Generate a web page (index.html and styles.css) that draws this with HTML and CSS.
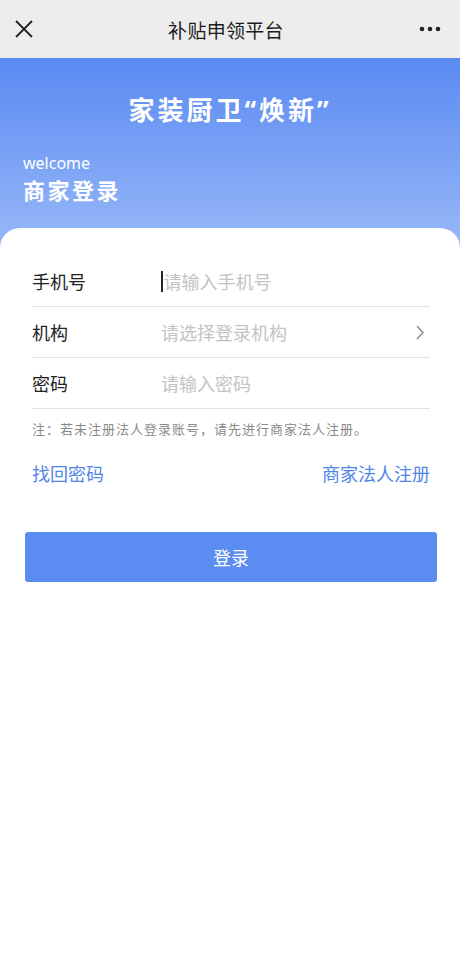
FILE: index.html
```html
<!DOCTYPE html>
<html lang="zh-CN">
<head>
    <meta charset="UTF-8">
    <meta name="viewport" content="width=device-width, initial-scale=1.0">
    <title>补贴申领平台</title>
    <link rel="stylesheet" href="styles.css">
</head>
<body>

    <div class="topbar">
        <svg class="close-icon" width="18" height="18" viewBox="0 0 18 18">
            <path d="M1 1 L17 17 M17 1 L1 17" stroke="#222" stroke-width="1.8" fill="none"/>
        </svg>
        <div class="topbar-title">补贴申领平台</div>
        <svg class="more-icon" width="22" height="6" viewBox="0 0 22 6">
            <circle cx="3" cy="3" r="2.3" fill="#222"/>
            <circle cx="11" cy="3" r="2.3" fill="#222"/>
            <circle cx="19" cy="3" r="2.3" fill="#222"/>
        </svg>
    </div>

    <div class="hero">
        <h1>家装厨卫“焕新”</h1>
        <div class="welcome">welcome</div>
        <div class="hero-sub">商家登录</div>
    </div>

    <div class="card">
        <div class="form-row">
            <label>手机号</label>
            <div class="field"><span class="caret"></span><span class="placeholder">请输入手机号</span></div>
        </div>
        <div class="form-row">
            <label>机构</label>
            <div class="field"><span class="placeholder">请选择登录机构</span></div>
            <svg class="arrow" width="8" height="15" viewBox="0 0 8 15">
                <path d="M1 1 L7 7.5 L1 14" stroke="#888" stroke-width="1.4" fill="none"/>
            </svg>
        </div>
        <div class="form-row">
            <label>密码</label>
            <div class="field"><span class="placeholder">请输入密码</span></div>
        </div>

        <p class="note">注：若未注册法人登录账号，请先进行商家法人注册。</p>

        <div class="links">
            <a href="#">找回密码</a>
            <a href="#">商家法人注册</a>
        </div>

        <button class="login-btn">登录</button>
    </div>

</body>
</html>
```

FILE: styles.css
```css
body {
    margin: 0;
    padding: 0;
    font-family: "Noto Sans CJK SC", "Noto Sans", sans-serif;
    background: #fff;
}
.topbar {
    height: 58px;
    background: #ededed;
    display: flex;
    align-items: center;
    justify-content: space-between;
    padding: 0 19px 0 14px;
}
.topbar-title {
    font-size: 19px;
    color: #1c1c1c;
    letter-spacing: 0.3px;
}
.close-icon { margin-left: 1px; }
.hero {
    background: linear-gradient(180deg, #5a8af2 0%, #98b8f7 100%);
    padding: 33px 23px 45px;
    color: #fff;
}
.hero h1 {
    margin: 0;
    font-family: "Noto Sans", "Noto Sans CJK SC", sans-serif;
    font-size: 26px;
    line-height: 38px;
    font-weight: 700;
    letter-spacing: 3px;
    text-align: center;
}
.welcome {
    margin-top: 24px;
    font-family: "Noto Sans", sans-serif;
    font-size: 16px;
    line-height: 20px;
}
.hero-sub {
    margin-top: 3px;
    font-size: 22px;
    line-height: 27px;
    font-weight: 700;
    letter-spacing: 2.5px;
}
.card {
    margin-top: -20px;
    background: #fff;
    border-radius: 20px 20px 0 0;
    padding: 28px 30px 0 32px;
    min-height: 700px;
}
.form-row {
    display: flex;
    align-items: center;
    height: 50px;
    border-bottom: 1.5px solid #e3e3e3;
}
.form-row label {
    width: 129px;
    font-size: 18px;
    color: #222;
}
.field {
    flex: 1;
    display: flex;
    align-items: center;
    font-size: 18px;
}
.placeholder { color: #c3c3c3; }
.caret {
    width: 1.5px;
    height: 21px;
    background: #222;
    margin-right: 1px;
}
.arrow { margin-right: 6px; }
.note {
    margin: 10px 0 0;
    font-size: 13px;
    line-height: 20px;
    letter-spacing: 1px;
    color: #8a8a8a;
}
.links {
    margin-top: 22px;
    display: flex;
    justify-content: space-between;
}
.links a {
    font-size: 18px;
    line-height: 24px;
    color: #5286e9;
    text-decoration: none;
}
.login-btn {
    display: block;
    margin: 47px -7px 0 -7px;
    width: calc(100% + 14px);
    height: 50px;
    border: none;
    border-radius: 3px;
    background: #5b8cf2;
    color: #fff;
    font-family: "Noto Sans CJK SC", sans-serif;
    font-size: 18px;
}
```
